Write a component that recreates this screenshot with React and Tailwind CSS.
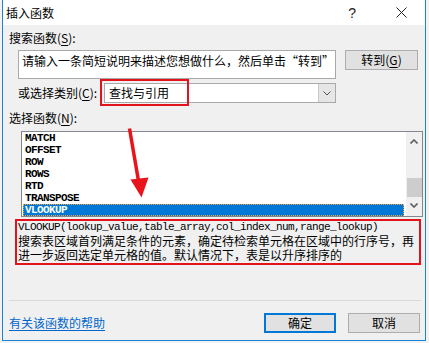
import React from "react";

const FUNCS = ["MATCH", "OFFSET", "ROW", "ROWS", "RTD", "TRANSPOSE", "VLOOKUP"];

function Key({ children }) {
  return <span className="underline underline-offset-2">{children}</span>;
}

export default function App() {
  return (
    <div className="relative h-[343px] w-[429px] overflow-hidden bg-[#f2f2f2] pl-[2px] font-['Noto_Sans_CJK_SC','Noto_Sans',sans-serif] text-[12px] text-black">
      <div className="flex h-[341px] w-[424px] flex-col border-x border-b border-[#1883d7] bg-[#f0f0f0]">
        {/* title bar */}
        <div className="flex h-[25px] items-center bg-white pl-[3px]">
          <span className="text-[12px] leading-none">插入函数</span>
          <span className="ml-auto mr-[40px] font-['Liberation_Sans',sans-serif] text-[14px] leading-none text-[#222]">?</span>
          <svg width="11" height="11" viewBox="0 0 11 11" className="mr-[18px]">
            <path d="M0.5 0.5 L10.5 10.5 M10.5 0.5 L0.5 10.5" stroke="#222" strokeWidth="1" fill="none" />
          </svg>
        </div>

        <div className="flex flex-col pl-[6px]">
          <div className="mt-[5px] h-[16px] leading-[16px]">
            搜索函数(<Key>S</Key>):
          </div>

          <div className="ml-[9px] mt-[4px] flex items-start gap-[9px]">
            <div className="h-[29px] w-[318px] border border-[#a9a9a9] bg-white pl-[3px] pt-[2px] leading-[16px]">
              请输入一条简短说明来描述您想做什么，然后单击“转到”
            </div>
            <button className="flex h-[20px] w-[73px] items-center justify-center border border-[#adadad] bg-[#e1e1e1] leading-none">
              转到(<Key>G</Key>)
            </button>
          </div>

          <div className="relative ml-[9px] mt-[4px] flex items-center">
            <span className="w-[86px] leading-[16px]">
              或选择类别(<Key>C</Key>):
            </span>
            <div className="flex h-[20px] w-[232px] items-center border border-[#a9a9a9] bg-white">
              <span className="pl-[4px] leading-none">查找与引用</span>
              <div className="ml-auto flex h-full w-[17px] items-center justify-center border-l border-[#c8c8c8] bg-[#e6e6e6]">
                <svg width="8" height="5" viewBox="0 0 8 5">
                  <path d="M0.5 0.5 L4 4 L7.5 0.5" stroke="#555" strokeWidth="1" fill="none" />
                </svg>
              </div>
            </div>
            <div className="absolute left-[82px] top-[-4px] h-[27px] w-[89px] border-2 border-[#e3121b]" />
          </div>

          <div className="mt-[7px] h-[16px] leading-[16px]">
            选择函数(<Key>N</Key>):
          </div>

          <div className="ml-[12px] mt-[5px] flex h-[86px] w-[402px] border border-[#828790] bg-white">
            <div className="flex flex-1 flex-col pl-[1px] font-['Liberation_Mono',monospace] text-[11px] font-bold tracking-[-0.6px]">
              {FUNCS.map((f) =>
                f === "VLOOKUP" ? (
                  <div
                    key={f}
                    className="h-[12px] w-[381px] border border-dotted border-[#f7a13a] bg-[#0078d7] pl-[1px] leading-[10px] text-white"
                  >
                    {f}
                  </div>
                ) : (
                  <div key={f} className="h-[12px] pl-[2px] leading-[12px]">
                    {f}
                  </div>
                )
              )}
            </div>
            <div className="flex w-[16px] flex-col items-center bg-[#f0f0f0]">
              <svg width="8" height="5" viewBox="0 0 8 5" className="mt-[7px]">
                <path d="M0.5 4.5 L4 1 L7.5 4.5" stroke="#606060" strokeWidth="1.6" fill="none" />
              </svg>
              <div className="mt-[34px] h-[19px] w-[15px] bg-[#cdcdcd]" />
              <svg width="8" height="5" viewBox="0 0 8 5" className="mt-[6px]">
                <path d="M0.5 0.5 L4 4 L7.5 0.5" stroke="#606060" strokeWidth="1.6" fill="none" />
              </svg>
            </div>
          </div>

          <div className="ml-[6px] mt-[2px] flex h-[46px] w-[406px] flex-col border-2 border-[#e3121b] pl-[1px]">
            <div className="h-[12px] font-['Liberation_Mono',monospace] text-[11px] leading-[12px] tracking-[-0.6px]">
              VLOOKUP(lookup_value,table_array,col_index_num,range_lookup)
            </div>
            <div className="mt-[1px] h-[14px] leading-[14px]">
              搜索表区域首列满足条件的元素，确定待检索单元格在区域中的行序号，再
            </div>
            <div className="h-[14px] leading-[14px]">进一步返回选定单元格的值。默认情况下，表是以升序排序的</div>
          </div>

          <div className="mt-[35px] h-px w-[412px] bg-[#d9d9d9]" />

          <div className="mt-[12px] flex h-[20px] items-center">
            <span className="text-[#0066cc] underline underline-offset-2">有关该函数的帮助</span>
            <button className="ml-auto flex h-[20px] w-[72px] items-center justify-center border-2 border-[#0078d7] bg-[#e1e1e1] leading-none">
              确定
            </button>
            <button className="ml-[12px] mr-[5px] flex h-[20px] w-[72px] items-center justify-center border border-[#adadad] bg-[#e1e1e1] leading-none">
              取消
            </button>
          </div>
        </div>
      </div>

      {/* red annotation arrow */}
      <svg className="pointer-events-none absolute left-0 top-0" width="429" height="343" viewBox="0 0 429 343">
        <path d="M129.5 128.5 L138.5 181" stroke="#e8141b" strokeWidth="3.5" fill="none" />
        <path d="M130.5 179.5 L148.5 177.5 L141.5 197.5 Z" fill="#e8141b" />
      </svg>
    </div>
  );
}
